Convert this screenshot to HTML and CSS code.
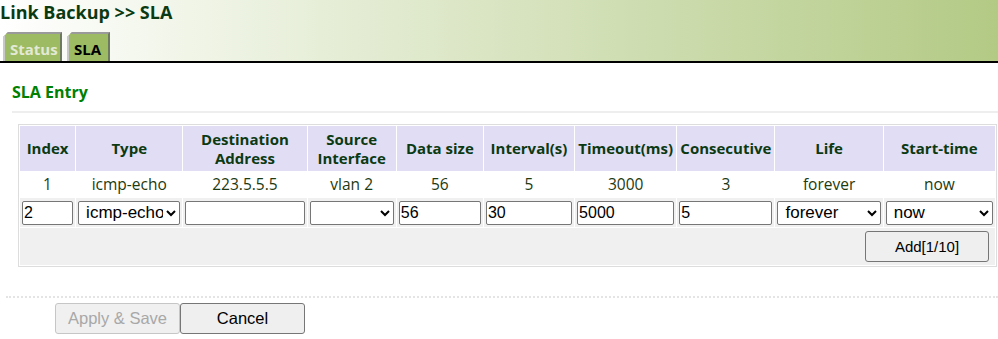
FILE: index.html
```html
<!DOCTYPE html>
<html>
<head>
<meta charset="utf-8">
<link rel="stylesheet" href="styles.css">
</head>
<body>
<div class="header">
  <div class="title">Link Backup &gt;&gt; SLA</div>
  <div class="tabs">
    <div class="tab tab-off">Status</div>
    <div class="tab tab-on">SLA</div>
  </div>
</div>
<div class="content">
  <h2 class="section-title">SLA Entry</h2>
  <table class="grid">
    <colgroup>
      <col class="c-index"><col class="c-type"><col class="c-dest"><col class="c-src"><col class="c-data">
      <col class="c-int"><col class="c-time"><col class="c-cons"><col class="c-life"><col class="c-start">
    </colgroup>
    <tr class="head">
      <th>Index</th><th>Type</th><th>Destination<br>Address</th><th>Source<br>Interface</th><th>Data size</th>
      <th>Interval(s)</th><th>Timeout(ms)</th><th>Consecutive</th><th>Life</th><th>Start-time</th>
    </tr>
    <tr class="data">
      <td>1</td><td>icmp-echo</td><td>223.5.5.5</td><td>vlan 2</td><td>56</td>
      <td>5</td><td>3000</td><td>3</td><td>forever</td><td>now</td>
    </tr>
    <tr class="edit">
      <td><input class="field" type="text" value="2"></td>
      <td><select class="field"><option>icmp-echo</option></select></td>
      <td><input class="field" type="text" value=""></td>
      <td><select class="field"><option></option></select></td>
      <td><input class="field" type="text" value="56"></td>
      <td><input class="field" type="text" value="30"></td>
      <td><input class="field" type="text" value="5000"></td>
      <td><input class="field" type="text" value="5"></td>
      <td><select class="field"><option>forever</option></select></td>
      <td><select class="field"><option>now</option></select></td>
    </tr>
    <tr class="actions">
      <td colspan="10"><button class="btn add-btn">Add[1/10]</button></td>
    </tr>
  </table>
</div>
<div class="footer">
  <div class="buttons">
    <button class="btn btn-wide" disabled>Apply &amp; Save</button>
    <button class="btn btn-wide">Cancel</button>
  </div>
</div>
</body>
</html>
```

FILE: styles.css
```css
html, body {
  margin: 0;
  padding: 0;
  background: #fff;
}
body {
  font-family: "Open Sans", "Noto Sans", sans-serif;
  color: #003300;
}
.header {
  height: 61px;
  border-bottom: 2px solid #000;
  background: linear-gradient(to right, #ffffff 0%, #b3ca85 100%);
  display: flex;
  flex-direction: column;
  justify-content: space-between;
}
.title {
  font-size: 18px;
  font-weight: 700;
  color: #0b3a12;
  line-height: 24px;
  padding-left: 0;
}
.tabs {
  display: flex;
  gap: 5px;
  padding-left: 3px;
}
.tab {
  height: 29px;
  box-sizing: border-box;
  padding: 4px 5px 0 5px;
  font-size: 15px;
  font-weight: 700;
  line-height: 22px;
  background: #9dbb62;
  border-top: 2px solid #9a9a9a;
  border-left: 2px solid #c8c8c8;
  border-right: 2px solid #6e7a60;
  clip-path: polygon(5px 0, 100% 0, 100% 100%, 0 100%, 0 5px);
}
.tab-off {
  width: 59px;
  color: #e3e9d6;
}
.tab-on {
  width: 43px;
  color: #000;
}
.content {
  padding: 0 0 0 12px;
}
.section-title {
  margin: 17px 0 0 0;
  font-size: 16px;
  font-weight: 700;
  color: #008000;
  line-height: 24px;
  padding-bottom: 7px;
  border-bottom: 2px solid #eeeeee;
}
.grid {
  margin: 11px 0 0 6px;
  width: 979px;
  border: 1px solid #dddddd;
  border-collapse: separate;
  border-spacing: 1px;
  table-layout: fixed;
  font-size: 15px;
}
.c-index { width: 55px; }
.c-type { width: 106px; }
.c-dest { width: 123px; }
.c-src { width: 88px; }
.c-data { width: 86px; }
.c-int { width: 90px; }
.c-time { width: 101px; }
.c-cons { width: 97px; }
.c-life { width: 107px; }
.c-start { width: 111px; }
.grid th {
  background: #e1ddf5;
  color: #0b3a12;
  font-weight: 700;
  height: 45px;
  padding: 0;
  line-height: 19px;
  white-space: nowrap;
}
.grid .data td {
  text-align: center;
  color: #1d3a10;
  height: 25px;
  padding: 0;
  line-height: 19px;
  font-size: 15.5px;
}
.grid .edit td {
  background: #f0f0f0;
  height: 29px;
  padding: 0 2px;
  box-sizing: border-box;
}
.field {
  width: 100%;
  height: 24px;
  box-sizing: border-box;
  margin: 0;
  font-family: "Liberation Sans", Arial, sans-serif;
  font-size: 16px;
  color: #000;
  border: 1px solid #767676;
  border-radius: 2px;
  padding: 0 1px;
  background: #fff;
}
select.field {
  padding: 0 0 0 3px;
  font-size: 17px;
}
.grid .actions td {
  background: #f0f0f0;
  height: 37px;
  padding: 0 6px 0 0;
  text-align: right;
}
.btn {
  font-family: "Liberation Sans", Arial, sans-serif;
  background: #efefef;
  border: 1px solid #767676;
  border-radius: 3px;
  color: #000;
  margin: 0;
}
.add-btn {
  width: 124px;
  height: 31px;
  font-size: 15px;
}
.footer {
  margin-top: 29px;
  padding-left: 6px;
}
.buttons {
  border-top: 2px dotted #e4e4e4;
  padding: 5px 0 0 49px;
  display: flex;
}
.btn-wide {
  width: 125px;
  height: 31px;
  font-size: 16.5px;
}
.btn-wide:disabled {
  color: #a8a8a8;
  border-color: #c6c6c6;
  background: #f0f0f0;
}
```
